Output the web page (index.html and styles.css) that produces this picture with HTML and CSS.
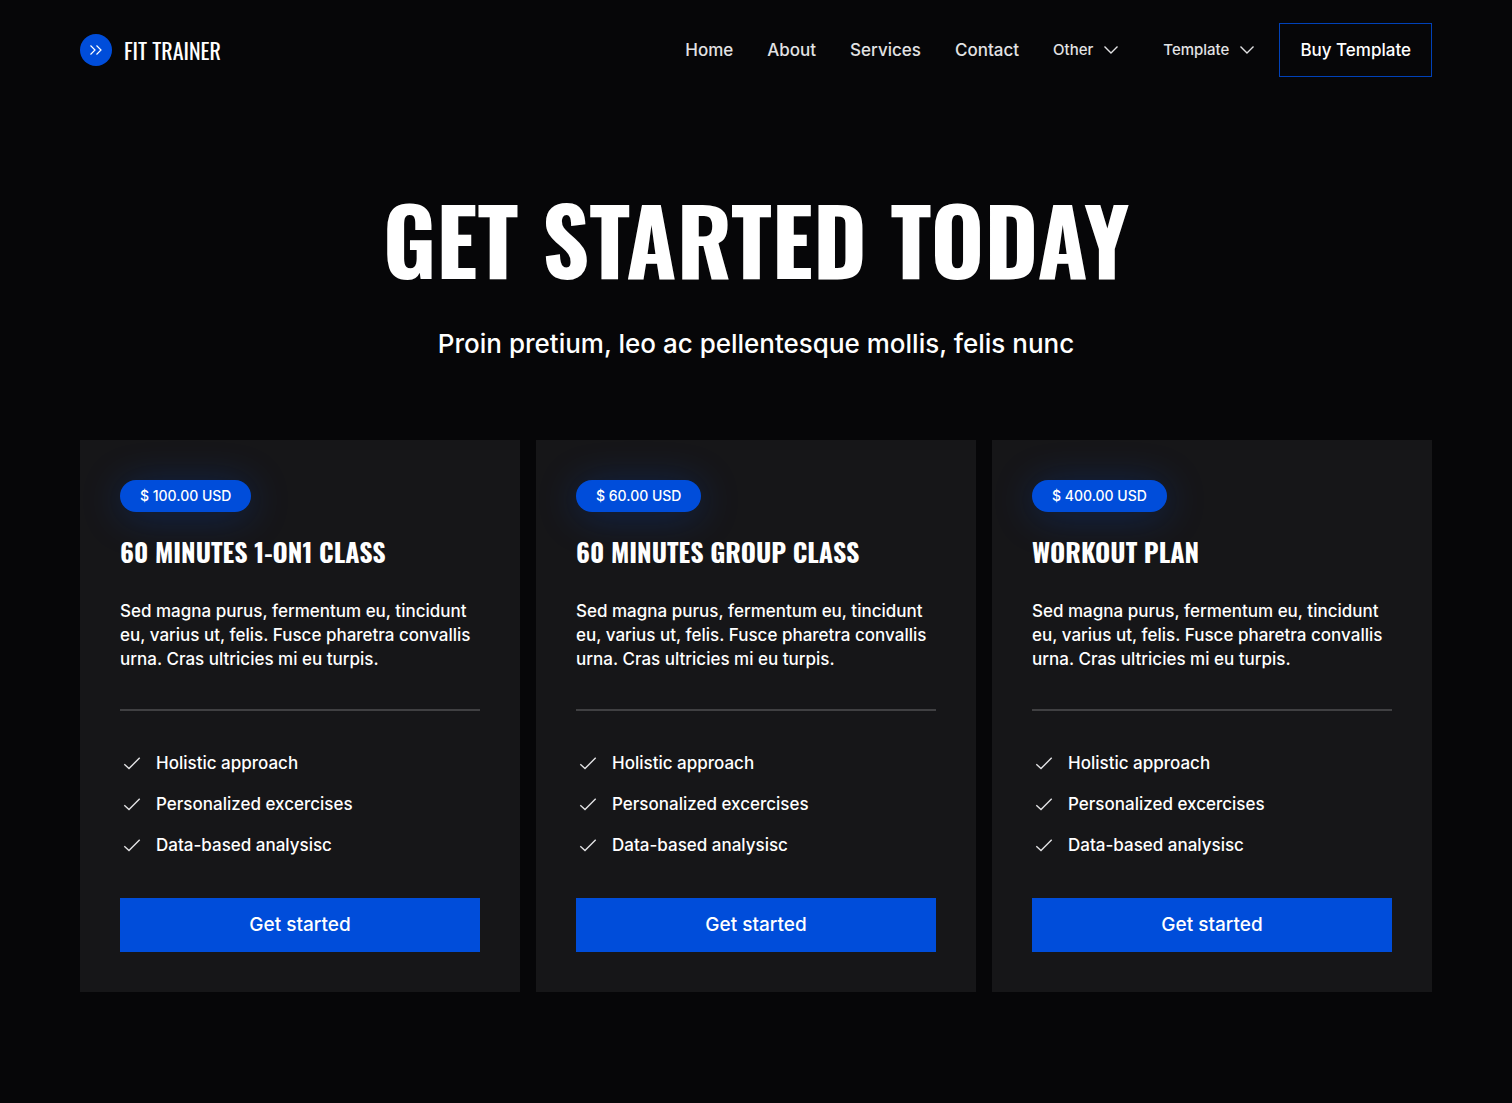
FILE: index.html
```html
<!DOCTYPE html>
<html lang="en">
  <head>
    <meta charset="utf-8" />
    <meta name="viewport" content="width=device-width, initial-scale=1.0" />
    <title>Fit Trainer</title>
    <link rel="stylesheet" href="styles.css">
  </head>
  <body>
    <svg class="sprite" aria-hidden="true">
      <symbol id="chevron" viewBox="0 0 16 16">
        <path d="M1.500 4.500 8 11l6.500-6.500" />
      </symbol>
      <symbol id="check" viewBox="0 0 24 24">
        <path d="M4.300 13.200 9 17.500 19.700 6.800" />
      </symbol>
    </svg>
    <header class="header">
      <a class="logo" href="#">
        <svg class="logo-mark" viewBox="0 0 32 32" aria-hidden="true">
          <circle cx="16" cy="16" r="16" />
          <path d="M10.500 11.500 15 16l-4.500 4.500M16.500 11.500 21 16l-4.500 4.500" />
        </svg>
        <span class="logo-text">FIT TRAINER</span>
      </a>
      <nav class="nav">
        <a class="nav-link" href="#">Home</a>
        <a class="nav-link" href="#">About</a>
        <a class="nav-link" href="#">Services</a>
        <a class="nav-link" href="#">Contact</a>
        <button class="nav-drop" type="button">
          Other
          <svg class="chevron"><use href="#chevron" /></svg>
        </button>
        <button class="nav-drop" type="button">
          Template
          <svg class="chevron"><use href="#chevron" /></svg>
        </button>
        <a class="buy" href="#">Buy Template</a>
      </nav>
    </header>
    <main class="main">
      <h1>GET STARTED TODAY</h1>
      <p class="lead">Proin pretium, leo ac pellentesque mollis, felis nunc</p>
      <div class="cards">
        <section class="card">
          <span class="price">$ 100.00 USD</span>
          <h2>60 MINUTES 1-ON1 CLASS</h2>
          <p class="text">Sed magna purus, fermentum eu, tincidunt eu, varius ut, felis. Fusce pharetra convallis urna. Cras ultricies mi eu turpis.</p>
          <ul class="features">
            <li><svg class="check"><use href="#check" /></svg>Holistic approach</li>
            <li><svg class="check"><use href="#check" /></svg>Personalized excercises</li>
            <li><svg class="check"><use href="#check" /></svg>Data-based analysisc</li>
          </ul>
          <button class="start" type="button">Get started</button>
        </section>
        <section class="card">
          <span class="price">$ 60.00 USD</span>
          <h2>60 MINUTES GROUP CLASS</h2>
          <p class="text">Sed magna purus, fermentum eu, tincidunt eu, varius ut, felis. Fusce pharetra convallis urna. Cras ultricies mi eu turpis.</p>
          <ul class="features">
            <li><svg class="check"><use href="#check" /></svg>Holistic approach</li>
            <li><svg class="check"><use href="#check" /></svg>Personalized excercises</li>
            <li><svg class="check"><use href="#check" /></svg>Data-based analysisc</li>
          </ul>
          <button class="start" type="button">Get started</button>
        </section>
        <section class="card">
          <span class="price">$ 400.00 USD</span>
          <h2>WORKOUT PLAN</h2>
          <p class="text">Sed magna purus, fermentum eu, tincidunt eu, varius ut, felis. Fusce pharetra convallis urna. Cras ultricies mi eu turpis.</p>
          <ul class="features">
            <li><svg class="check"><use href="#check" /></svg>Holistic approach</li>
            <li><svg class="check"><use href="#check" /></svg>Personalized excercises</li>
            <li><svg class="check"><use href="#check" /></svg>Data-based analysisc</li>
          </ul>
          <button class="start" type="button">Get started</button>
        </section>
      </div>
    </main>
  </body>
</html>
```
FILE: styles.css
```css
* {
  box-sizing: border-box;
}
body {
  margin: 0;
  background: #060608;
  color: #fff;
  font-family: Satoshi, Inter, sans-serif;
  font-size: 17px;
  font-weight: 500;
  line-height: 24px;
}
h1,
h2,
p,
ul {
  margin: 0;
  padding: 0;
}
a {
  color: inherit;
  text-decoration: none;
}
button {
  font: inherit;
  color: inherit;
  border: none;
  background: none;
  cursor: pointer;
}
.sprite {
  display: none;
}
.header {
  display: flex;
  align-items: center;
  justify-content: space-between;
  padding: 23px 80px;
}
.logo {
  display: flex;
  align-items: center;
  gap: 12px;
}
.logo-mark {
  width: 32px;
  height: 32px;
  fill: #004dda;
}
.logo-mark path {
  fill: none;
  stroke: #fff;
  stroke-width: 1.2;
}
.logo-text,
h1,
h2 {
  font-family: Oswald, "Liberation Sans Narrow", "Roboto Condensed", sans-serif;
}
.logo-text {
  font-size: 22px;
  font-weight: 400;
  line-height: 22px;
}
.nav {
  display: flex;
  align-items: center;
  color: #e2e2e4;
}
.nav-link {
  margin-right: 34px;
}
.nav-drop {
  display: flex;
  align-items: center;
  gap: 10px;
  margin-right: 24px;
  padding: 0;
  font-size: 15px;
}
.nav-drop + .nav-drop {
  margin-left: 20px;
}
.chevron {
  width: 16px;
  height: 16px;
  fill: none;
  stroke: #e2e2e4;
  stroke-width: 1.4;
}
.buy {
  padding: 14px 20px;
  border: 1px solid #0041b8;
  color: #fff;
}
.main {
  padding: 0 80px 111px;
}
h1 {
  margin-top: 82px;
  font-size: 92px;
  font-weight: 700;
  line-height: 112px;
  text-align: center;
}
.lead {
  margin-top: 32px;
  font-size: 26px;
  line-height: 36px;
  text-align: center;
}
.cards {
  display: grid;
  grid-template-columns: repeat(3, 1fr);
  gap: 16px;
  margin-top: 78px;
}
.card {
  display: flex;
  flex-direction: column;
  align-items: flex-start;
  padding: 40px;
  background: #161618;
}
.price {
  padding: 4px 20px;
  border-radius: 16px;
  background: #004dda;
  box-shadow: 0 4px 40px rgba(0, 77, 218, 0.3);
  font-size: 14px;
}
h2 {
  margin-top: 24px;
  font-size: 26px;
  font-weight: 700;
  line-height: 32px;
}
.text {
  width: 100%;
  margin-top: 31px;
  padding-bottom: 38px;
  border-bottom: 2px solid #404042;
}
.features {
  display: flex;
  flex-direction: column;
  gap: 17px;
  margin-top: 40px;
  list-style: none;
}
.features li {
  display: flex;
  align-items: center;
  gap: 12px;
}
.check {
  width: 24px;
  height: 24px;
  fill: none;
  stroke: #e2e2e4;
  stroke-width: 1.4;
}
.start {
  width: 100%;
  margin-top: 41px;
  padding: 15px 20px;
  background: #004dda;
  font-size: 19px;
}
```
